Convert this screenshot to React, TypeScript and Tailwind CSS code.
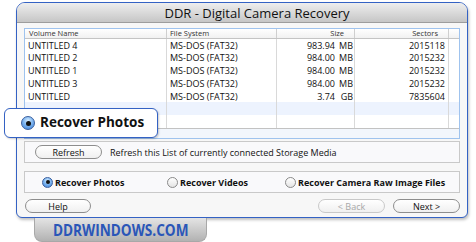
import React from "react";

const rows = [
  { name: "UNTITLED 4", fs: "MS-DOS (FAT32)", size: "983.94", unit: "MB", sectors: "2015118" },
  { name: "UNTITLED 2", fs: "MS-DOS (FAT32)", size: "984.00", unit: "MB", sectors: "2015232" },
  { name: "UNTITLED 1", fs: "MS-DOS (FAT32)", size: "984.00", unit: "MB", sectors: "2015232" },
  { name: "UNTITLED 3", fs: "MS-DOS (FAT32)", size: "984.00", unit: "MB", sectors: "2015232" },
  { name: "UNTITLED", fs: "MS-DOS (FAT32)", size: "3.74", unit: "GB", sectors: "7835604" },
  null,
  null,
];

function Radio({ on, big }: { on?: boolean; big?: boolean }) {
  const s = big ? "w-[14px] h-[14px]" : "w-[11px] h-[11px]";
  if (on) {
    return (
      <span
        className={`${s} rounded-full border border-[#3a5f9e] bg-[radial-gradient(circle_at_50%_30%,#d6ecff_0%,#7fb6f0_45%,#3c7fd6_100%)] flex items-center justify-center shrink-0`}
      >
        <span className={`${big ? "w-[5px] h-[5px]" : "w-[4px] h-[4px]"} rounded-full bg-[#111]`} />
      </span>
    );
  }
  return (
    <span
      className={`${s} rounded-full border border-[#8a8a8a] bg-[linear-gradient(#ffffff,#e4e4e4)] shrink-0`}
    />
  );
}

function Pill({ children, w, disabled }: { children: React.ReactNode; w: string; disabled?: boolean }) {
  return (
    <div
      className={`${w} h-[14px] rounded-full border ${
        disabled ? "border-[#c8c8c8] text-[#a8a8a8]" : "border-[#8d8d8d] text-[#111]"
      } bg-[linear-gradient(#ffffff,#f0f0f0)] flex items-center justify-center text-[9px] leading-none whitespace-nowrap`}
    >
      {children}
    </div>
  );
}

export default function App() {
  return (
    <div
      className="relative w-[476px] h-[242px] bg-white overflow-hidden"
      style={{ fontFamily: '"Lucida Grande", "Open Sans", sans-serif' }}
    >
      <div className="ml-[16px] mt-[2px] w-[452px] h-[216px] border border-[#3462c4] rounded-t-[9px] rounded-b-[6px] bg-[#f7f7f7] shadow-[1px_2px_3px_rgba(0,0,0,0.25)] flex flex-col overflow-hidden">
        <div className="h-[20px] shrink-0 bg-[linear-gradient(#eeeeee,#c6c6c6)] border-b border-[#9d9d9d] flex items-center justify-center text-[13px] text-[#111] leading-none pt-[1px] pl-[30px] whitespace-nowrap">
          DDR - Digital Camera Recovery
        </div>
        <div className="flex-1 flex flex-col px-[7px] pt-[5px]">
          {/* table */}
          <div className="h-[111px] border border-[#9fc3ee] bg-[#f2f6fc] shrink-0">
            <div className="h-[100px] bg-white border-b border-[#c2c2c2] flex flex-col text-[9px] text-[#111] leading-none whitespace-nowrap">
              <div className="h-[10px] flex border-b border-[#c4c4c4] bg-[linear-gradient(#ffffff,#f1f1f1)] text-[7.5px] text-[#333]">
                <div className="w-[142px] pl-[4px] border-r border-[#cfcfcf] flex items-center">Volume Name</div>
                <div className="w-[110px] pl-[3px] border-r border-[#cfcfcf] flex items-center">File System</div>
                <div className="w-[78px] pr-[10px] border-r border-[#cfcfcf] flex items-center justify-end">Size</div>
                <div className="w-[94px] pr-[10px] border-r border-[#cfcfcf] flex items-center justify-end">Sectors</div>
                <div className="flex-1" />
              </div>
              {rows.map((r, i) => (
                <div
                  key={i}
                  className={`h-[13px] flex items-center ${i === 5 ? "bg-[#edf3fe]" : "bg-white"}`}
                >
                  <div className="w-[142px] pl-[3px] h-full flex items-center border-r border-[#d9d9d9]">{r?.name}</div>
                  <div className="w-[110px] pl-[3px] h-full flex items-center border-r border-[#d9d9d9]">{r?.fs}</div>
                  <div className="w-[78px] pr-[1px] h-full flex items-center justify-end border-r border-[#d9d9d9]">
                    {r && (
                      <>
                        <span>{r.size}</span>
                        <span className="w-[18px] text-right">{r.unit}</span>
                      </>
                    )}
                  </div>
                  <div className="w-[94px] pr-[3px] h-full flex items-center justify-end border-r border-[#d9d9d9]">{r?.sectors}</div>
                  <div className="flex-1" />
                </div>
              ))}
            </div>
          </div>
          {/* refresh box */}
          <div className="mt-[2px] h-[22px] border border-[#c9c9c9] bg-[#f9f9fb] flex items-center pl-[10px] gap-[8px] shrink-0">
            <Pill w="w-[67px]">Refresh</Pill>
            <span className="text-[9px] text-[#111] leading-none whitespace-nowrap">Refresh this List of currently connected Storage Media</span>
          </div>
          {/* radio box */}
          <div className="mt-[8px] h-[22px] border border-[#c9c9c9] bg-[#f9f9fb] flex items-center pl-[17px] text-[9px] font-bold text-[#111] leading-none shrink-0 whitespace-nowrap">
            <div className="flex items-center gap-[2px] w-[125px]">
              <Radio on />
              <span>Recover Photos</span>
            </div>
            <div className="flex items-center gap-[2px] w-[118px]">
              <Radio />
              <span>Recover Videos</span>
            </div>
            <div className="flex items-center gap-[2px]">
              <Radio />
              <span>Recover Camera Raw Image Files</span>
            </div>
          </div>
          {/* buttons */}
          <div className="mt-[6px] flex items-center shrink-0 pl-[1px]">
            <Pill w="w-[66px]">Help</Pill>
            <div className="flex-1" />
            <Pill w="w-[67px]" disabled>
              &lt; Back
            </Pill>
            <div className="w-[8px]" />
            <Pill w="w-[67px]">Next &gt;</Pill>
          </div>
        </div>
      </div>

      {/* watermark tab */}
      <div className="ml-[34px] w-[173px] h-[24px] rounded-b-[8px] border border-t-0 border-[#a8a8a8] bg-[linear-gradient(#e4e4e4,#b2b2b2)] flex items-center justify-center">
        <span className="text-[16px] font-bold text-[#2a56b8] leading-none whitespace-nowrap scale-x-[0.85]" style={{ fontFamily: '"Open Sans", sans-serif' }}>
          DDRWINDOWS.COM
        </span>
      </div>

      {/* callout */}
      <div className="absolute left-[4px] top-[108px] w-[154px] h-[30px] rounded-[6px] border border-[#3462c4] bg-white shadow-[1px_1px_2px_rgba(0,0,0,0.2)] flex items-center pl-[16px] gap-[5px]">
        <Radio on big />
        <span className="text-[13.5px] font-bold text-[#111] leading-none whitespace-nowrap">Recover Photos</span>
      </div>
    </div>
  );
}
